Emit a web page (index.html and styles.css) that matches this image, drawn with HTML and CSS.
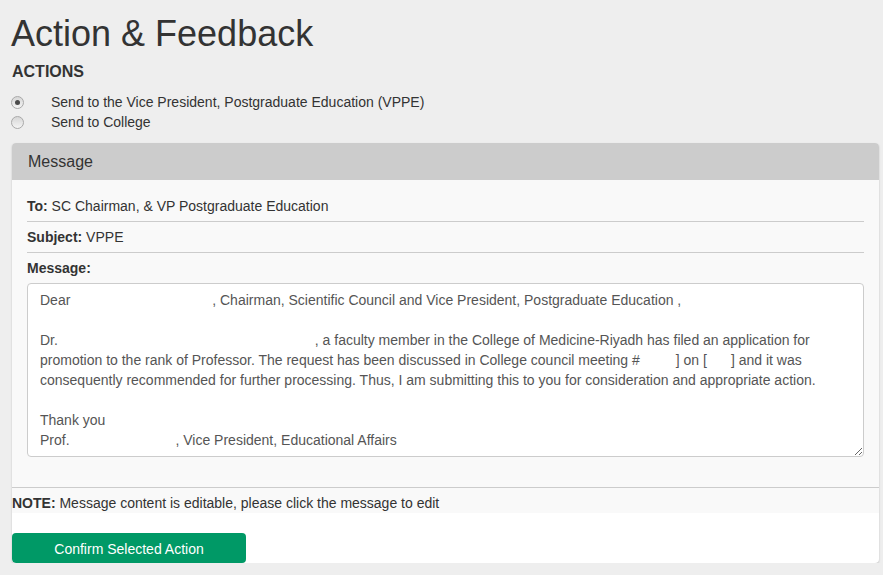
FILE: index.html
```html
<!DOCTYPE html>
<html lang="en">

<head>
    <meta charset="UTF-8">
    <meta name="viewport" content="width=device-width, initial-scale=1.0">
    <title>Action &amp; Feedback</title>
    <link rel="stylesheet" href="styles.css">
</head>

<body>
    <h1>Action &amp; Feedback</h1>
    <h2>ACTIONS</h2>

    <div class="actions">
        <label class="option">
            <input type="radio" name="action" value="vppe" checked>
            <span>Send to the Vice President, Postgraduate Education (VPPE)</span>
        </label>
        <label class="option">
            <input type="radio" name="action" value="college">
            <span>Send to College</span>
        </label>
    </div>

    <div class="panel">
        <div class="panel-heading">Message</div>
        <div class="panel-body">
            <div class="row"><b>To:</b> SC Chairman, &amp; VP Postgraduate Education</div>
            <div class="row"><b>Subject:</b> VPPE</div>
            <div class="msg-label"><b>Message:</b></div>
            <div class="msg-box" contenteditable="true">
                Dear <span class="hidden-name name-1"></span>, Chairman, Scientific Council and Vice President, Postgraduate Education ,<br>
                <br>
                Dr. <span class="hidden-name name-2"></span>, a faculty member in the College of Medicine-Riyadh has filed an application for<br>
                promotion to the rank of Professor. The request has been discussed in College council meeting #<span class="hidden-name num"></span>] on [<span class="hidden-name date"></span>] and it was<br>
                consequently recommended for further processing. Thus, I am submitting this to you for consideration and appropriate action.<br>
                <br>
                Thank you<br>
                Prof. <span class="hidden-name name-3"></span>, Vice President, Educational Affairs
            </div>
        </div>
        <div class="note"><b>NOTE:</b> Message content is editable, please click the message to edit</div>
        <button type="button" class="confirm">Confirm Selected Action</button>
    </div>
</body>

</html>
```

FILE: styles.css
```css
body {
    font-family: "Liberation Sans", Arial, sans-serif;
    font-size: 14px;
    color: #333333;
    margin: 0;
    padding: 0 4px 0 12px;
    background-color: #eeeeee;
}

h1 {
    font-size: 36px;
    font-weight: normal;
    line-height: 1.1;
    margin: 14px 0 0 -1px;
}

h2 {
    font-size: 16px;
    font-weight: bold;
    line-height: 1.1;
    margin: 9px 0 12px;
}

.actions {
    margin-bottom: 11px;
}

.option {
    display: flex;
    align-items: center;
    gap: 27px;
    line-height: 20px;
}

.option input {
    appearance: none;
    width: 13px;
    height: 13px;
    margin: 0 0 0 -1px;
    border: 1px solid #a9a9a9;
    border-radius: 50%;
    background: linear-gradient(#d6d6d6, #f4f4f4);
    display: grid;
    place-items: center;
}

.option input:checked::after {
    content: "";
    width: 5px;
    height: 5px;
    border-radius: 50%;
    background-color: #4a4a4a;
}

.panel {
    background-color: #ffffff;
    border-radius: 4px;
    box-shadow: 0 1px 2px rgba(0, 0, 0, 0.2);
    overflow: hidden;
}

.panel-heading {
    background-color: #cccccc;
    font-size: 16px;
    line-height: 17px;
    padding: 10px 16px;
}

.panel-body {
    background-color: #f9f9f9;
    padding: 11px 15px 15px;
    border-bottom: 1px solid #cccccc;
}

.row {
    line-height: 20px;
    padding: 5px 0;
    border-bottom: 1px solid #cccccc;
}

.msg-label {
    line-height: 20px;
    padding-top: 5px;
    margin-bottom: 5px;
}

.msg-box {
    background-color: #ffffff;
    color: #555555;
    line-height: 20px;
    height: 160px;
    padding: 6px 12px;
    border: 1px solid #cccccc;
    border-radius: 4px;
    overflow: auto;
    resize: vertical;
    margin-bottom: 15px;
    outline: none;
}

.hidden-name {
    display: inline-block;
    height: 1px;
}

.name-1 {
    width: 138px;
}

.name-2 {
    width: 253px;
}

.name-3 {
    width: 102px;
}

.num {
    width: 36px;
}

.date {
    width: 24px;
}

.note {
    background-color: #f9f9f9;
    line-height: 20px;
    padding-top: 5px;
    margin-bottom: 20px;
}

.confirm {
    display: block;
    width: 234px;
    height: 30px;
    padding: 2px 0 0;
    font-family: "Liberation Sans", Arial, sans-serif;
    font-size: 14px;
    color: #ffffff;
    background-color: #009966;
    border: none;
    border-radius: 4px;
}
```
